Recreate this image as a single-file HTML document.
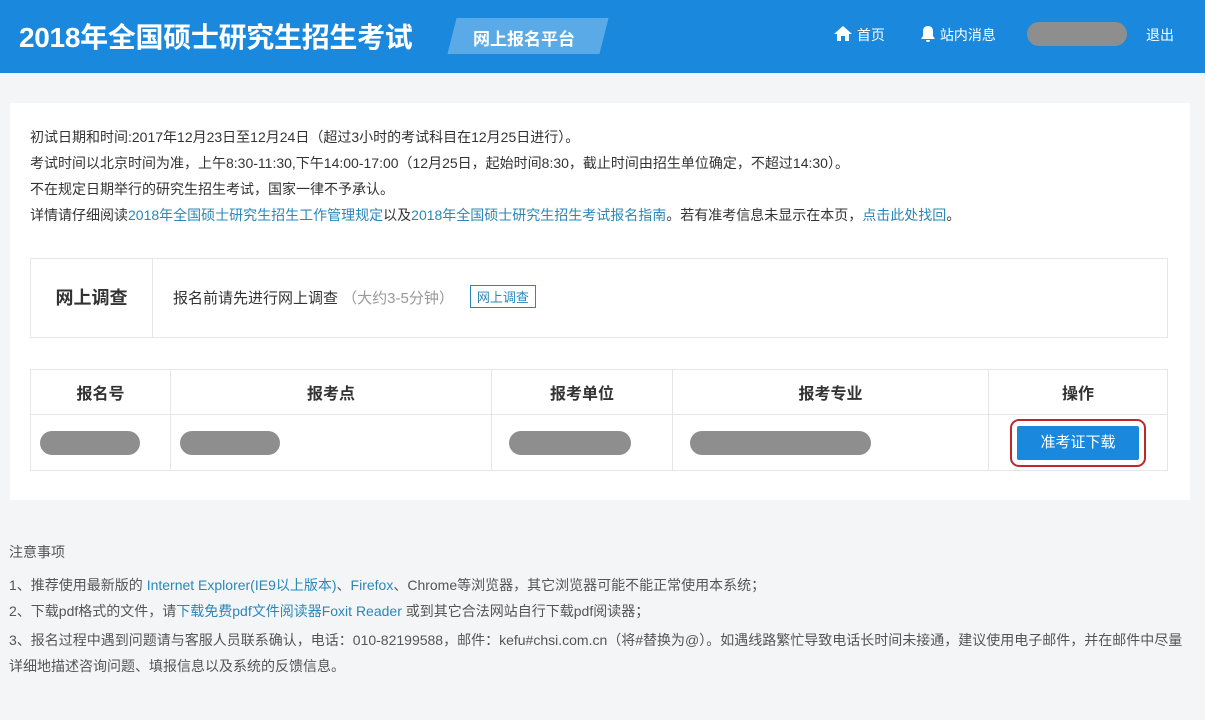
<!DOCTYPE html>
<html><head><meta charset="utf-8"><style>
*{margin:0;padding:0;box-sizing:border-box}
body{width:1205px;height:720px;overflow:hidden;background:#f4f5f7;font-family:"Liberation Sans","Noto Sans CJK SC",sans-serif;color:#333;position:relative}
.hd{position:absolute;left:0;top:0;width:1205px;height:73px;background:#1a88dc}
.t{position:absolute;left:19px;top:16px;font-size:28px;font-weight:bold;color:#fff;letter-spacing:-0.3px}
.tag{position:absolute;left:452px;top:18px;width:152px;height:36px;background:#5aaae8;transform:skewX(-14deg)}
.tagt{position:absolute;left:473px;top:25px;color:#fff;font-size:17px;font-weight:bold}
.nav{position:absolute;top:25px;color:#fff;font-size:14px}
.pill{position:absolute;left:1027px;top:22px;width:100px;height:24px;border-radius:12px;background:#8e8e8e}
.card{position:absolute;left:10px;top:103px;width:1180px;height:397px;background:#fff}
.p{position:absolute;left:30px;font-size:14px;color:#333;white-space:nowrap}
a{color:#2a87b8;text-decoration:none}
.sv{position:absolute;left:30px;top:258px;width:1138px;height:80px;border:1px solid #e6e6e6}
.sv .l{position:absolute;left:0;top:0;width:122px;height:78px;border-right:1px solid #e6e6e6;font-size:18px;font-weight:bold;text-align:center;line-height:78px}
.sv .r{position:absolute;left:142px;top:26px;font-size:15px}
.btn2{display:inline-block;border:1px solid #2a87b8;color:#2a87b8;font-size:13px;padding:1px 6px;margin-left:16px;vertical-align:1px}
table{position:absolute;left:30px;top:369px;border-collapse:collapse;width:1138px}
td,th{border:1px solid #e6e6e6;text-align:center;font-size:16px;font-weight:bold;color:#333}
th{height:45px}
td{height:56px}
.g{display:inline-block;height:24px;border-radius:12px;background:#8e8e8e;vertical-align:middle}
.dl{display:inline-block;width:122px;height:34px;background:#1a88dc;color:#fff;font-size:15px;font-weight:normal;line-height:34px;outline:2px solid #c0272d;outline-offset:5px;border-radius:2px}
.n{position:absolute;left:9px;font-size:14px;color:#555}
</style></head><body>
<div class="hd">
<div class="t">2018年全国硕士研究生招生考试</div>
<div class="tag"></div><div class="tagt">网上报名平台</div>
<div class="nav" style="left:833px"><svg width="20" height="17" viewBox="0 0 20 17" style="vertical-align:-2px"><path d="M10 1L1 9h3v7h4v-5h4v5h4V9h3z" fill="#fff"/></svg> 首页</div>
<div class="nav" style="left:920px"><svg width="16" height="18" viewBox="0 0 16 18" style="vertical-align:-3px"><path d="M8 1c-3 0-5 2-5 5v5l-2 3h14l-2-3V6c0-3-2-5-5-5zM6 15h4a2 2 0 0 1-4 0z" fill="#fff"/></svg> 站内消息</div>
<div class="pill"></div>
<div class="nav" style="left:1146px">退出</div>
</div>
<div class="card"></div>
<div class="p" style="top:127px">初试日期和时间:2017年12月23日至12月24日（超过3小时的考试科目在12月25日进行）。</div>
<div class="p" style="top:153px">考试时间以北京时间为准，上午8:30-11:30,下午14:00-17:00（12月25日，起始时间8:30，截止时间由招生单位确定，不超过14:30）。</div>
<div class="p" style="top:179px">不在规定日期举行的研究生招生考试，国家一律不予承认。</div>
<div class="p" style="top:205px">详情请仔细阅读<a>2018年全国硕士研究生招生工作管理规定</a>以及<a>2018年全国硕士研究生招生考试报名指南</a>。若有准考信息未显示在本页，<a>点击此处找回</a>。</div>
<div class="sv"><div class="l">网上调查</div><div class="r">报名前请先进行网上调查 <span style="color:#999">（大约3-5分钟）</span><span class="btn2">网上调查</span></div></div>
<table><tr><th style="width:140px">报名号</th><th style="width:321px">报考点</th><th style="width:181px">报考单位</th><th style="width:316px">报考专业</th><th>操作</th></tr>
<tr><td style="text-align:left;padding-left:9px"><span class="g" style="width:100px"></span></td><td style="text-align:left;padding-left:9px"><span class="g" style="width:100px"></span></td><td style="text-align:left;padding-left:17px"><span class="g" style="width:122px"></span></td><td style="text-align:left;padding-left:17px"><span class="g" style="width:181px"></span></td><td><span class="dl">准考证下载</span></td></tr></table>
<div class="n" style="top:542px">注意事项</div>
<div class="n" style="top:575px;white-space:nowrap">1、推荐使用最新版的 <a>Internet Explorer(IE9以上版本)</a>、<a>Firefox</a>、Chrome等浏览器，其它浏览器可能不能正常使用本系统；</div>
<div class="n" style="top:601px;white-space:nowrap">2、下载pdf格式的文件，请<a>下载免费pdf文件阅读器Foxit Reader</a> 或到其它合法网站自行下载pdf阅读器；</div>
<div class="n" style="top:627px;width:1182px;line-height:26px">3、报名过程中遇到问题请与客服人员联系确认，电话：010-82199588，邮件：kefu#chsi.com.cn（将#替换为@）。如遇线路繁忙导致电话长时间未接通，建议使用电子邮件，并在邮件中尽量详细地描述咨询问题、填报信息以及系统的反馈信息。</div>
</body></html>
